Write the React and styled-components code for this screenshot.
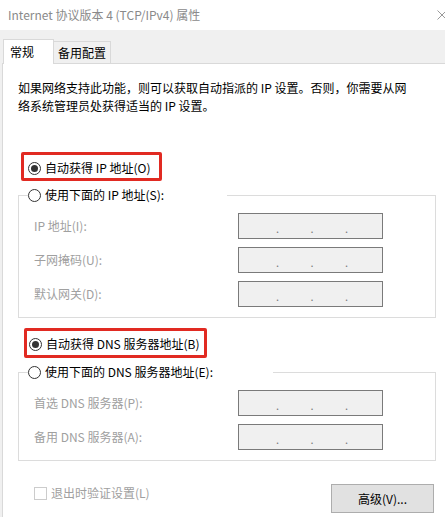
import React from 'react';
import styled, { createGlobalStyle } from 'styled-components';

const GlobalStyle = createGlobalStyle`
  html, body { margin: 0; padding: 0; background: #ffffff; }
  * { box-sizing: border-box; }
`;

const FONT = `"Noto Sans CJK SC", "Microsoft YaHei", "Liberation Sans", sans-serif`;

const Window = styled.div`
  width: 445px;
  height: 517px;
  overflow: hidden;
  display: flex;
  flex-direction: column;
  background: #ffffff;
  font-family: ${FONT};
  font-size: 12px;
  color: #000000;
`;

const TitleBar = styled.div`
  flex: none;
  height: 30px;
  display: flex;
  align-items: center;
  justify-content: space-between;
  padding-left: 8px;
  background: #ffffff;
`;

const Title = styled.span`
  color: #8a8a8a;
  font-size: 12px;
  line-height: 18px;
  white-space: nowrap;
`;

const CloseIcon = styled.svg`
  flex: none;
  width: 10px;
  height: 10px;
  margin-right: -2px;
`;

const Body = styled.div`
  flex: 1;
  display: flex;
  flex-direction: column;
  background: #f0f0f0;
  padding: 9px 0 0 2px;
`;

const TabStrip = styled.div`
  display: flex;
  align-items: flex-end;
  padding-left: 1px;
`;

const Tab = styled.div`
  position: relative;
  z-index: ${p => (p.$active ? 1 : 0)};
  width: ${p => p.$width}px;
  height: ${p => (p.$active ? 25 : 22)}px;
  margin-bottom: ${p => (p.$active ? -1 : 0)}px;
  display: flex;
  align-items: center;
  justify-content: ${p => (p.$active ? 'flex-start' : 'center')};
  padding-left: ${p => (p.$active ? 6 : 0)}px;
  padding-top: ${p => (p.$active ? 0 : 1)}px;
  background: ${p => (p.$active ? '#ffffff' : '#f0f0f0')};
  border: 1px solid #d9d9d9;
  border-bottom: none;
  border-left-width: ${p => (p.$active ? 1 : 0)}px;
  line-height: 18px;
  white-space: nowrap;
`;

const Panel = styled.div`
  flex: 1;
  display: flex;
  flex-direction: column;
  align-items: flex-start;
  background: #ffffff;
  border-top: 1px solid #d9d9d9;
  border-left: 1px solid #d9d9d9;
  padding: 15px 0 0 15px;
`;

const Description = styled.p`
  margin: 0;
  line-height: 18px;
  white-space: nowrap;
`;

const Highlight = styled.div`
  display: flex;
  align-items: center;
  gap: 4px;
  margin: ${p => p.$top}px 0 0 ${p => p.$left}px;
  padding: 4px ${p => p.$padRight}px ${p => p.$padBottom}px ${p => p.$padLeft}px;
  border: 3px solid #e12a22;
  border-radius: 2px;
  line-height: 18px;
  white-space: nowrap;
`;

const Radio = styled.span`
  flex: none;
  width: 13px;
  height: 13px;
  border-radius: 50%;
  border: 1px solid #333333;
  background: #ffffff;
  display: flex;
  align-items: center;
  justify-content: center;
  &::after {
    content: '';
    width: 7px;
    height: 7px;
    border-radius: 50%;
    background: ${p => (p.$checked ? '#333333' : 'transparent')};
  }
`;

const Group = styled.fieldset`
  width: 418px;
  min-width: 0;
  margin: 5px 0 0 0;
  padding: 9px 52px 10px 15px;
  border: 1px solid #dcdcdc;
`;

const Legend = styled.legend`
  display: flex;
  align-items: center;
  gap: 4px;
  height: 18px;
  line-height: 18px;
  margin-left: -6px;
  padding: 0 ${p => p.$gap}px 0 0;
  white-space: nowrap;
`;

const Fields = styled.div`
  display: flex;
  flex-direction: column;
  gap: 8px;
`;

const FieldRow = styled.div`
  display: flex;
  align-items: center;
  justify-content: space-between;
  height: 26px;
`;

const FieldLabel = styled.span`
  color: #a0a0a0;
  line-height: 18px;
  white-space: nowrap;
`;

const IpBox = styled.div`
  flex: none;
  width: 145px;
  height: 26px;
  display: flex;
  align-items: center;
  padding: 0 3px 0 6px;
  background: #f0f0f0;
  border: 1px solid #7a7a7a;
`;

const IpSegment = styled.span`
  flex: 1;
`;

const IpDot = styled.span`
  flex: none;
  width: 4px;
  text-align: center;
  color: #7a7a7a;
  font-size: 11px;
  line-height: 12px;
  margin-top: 3px;
`;

const Footer = styled.div`
  width: 416px;
  margin-top: 23px;
  display: flex;
  align-items: flex-start;
  justify-content: space-between;
`;

const CheckLabel = styled.label`
  display: flex;
  align-items: center;
  gap: 4px;
  padding-left: 16px;
  color: #a0a0a0;
  line-height: 18px;
  white-space: nowrap;
`;

const CheckBox = styled.span`
  flex: none;
  width: 13px;
  height: 13px;
  border: 1px solid #cccccc;
  background: #ffffff;
`;

const Button = styled.button`
  width: 103px;
  height: 29px;
  padding: 0;
  background: #e1e1e1;
  border: 1px solid #adadad;
  font-family: ${FONT};
  font-size: 12px;
  color: #000000;
  line-height: 18px;
`;

function IpInput() {
  return (
    <IpBox>
      <IpSegment />
      <IpDot>.</IpDot>
      <IpSegment />
      <IpDot>.</IpDot>
      <IpSegment />
      <IpDot>.</IpDot>
      <IpSegment />
    </IpBox>
  );
}

function Field({ label }) {
  return (
    <FieldRow>
      <FieldLabel>{label}</FieldLabel>
      <IpInput />
    </FieldRow>
  );
}

export default function App() {
  return (
    <>
      <GlobalStyle />
      <Window>
        <TitleBar>
          <Title>Internet 协议版本 4 (TCP/IPv4) 属性</Title>
          <CloseIcon viewBox="0 0 10 10">
            <path d="M0.5 0.5 L9.5 9.5 M9.5 0.5 L0.5 9.5" stroke="#9a9a9a" strokeWidth="1" fill="none" />
          </CloseIcon>
        </TitleBar>
        <Body>
          <TabStrip>
            <Tab $active $width={51}>常规</Tab>
            <Tab $width={57}>备用配置</Tab>
          </TabStrip>
          <Panel>
            <Description>
              如果网络支持此功能，则可以获取自动指派的 IP 设置。否则，你需要从网
              <br />
              络系统管理员处获得适当的 IP 设置。
            </Description>

            <Highlight $top={37} $left={3} $padLeft={4} $padRight={8} $padBottom={1}>
              <Radio $checked />
              自动获得 IP 地址(O)
            </Highlight>

            <Group>
              <Legend $gap={63}>
                <Radio />
                使用下面的 IP 地址(S):
              </Legend>
              <Fields>
                <Field label="IP 地址(I):" />
                <Field label="子网掩码(U):" />
                <Field label="默认网关(D):" />
              </Fields>
            </Group>

            <Highlight $top={10} $left={6} $padLeft={2} $padRight={5} $padBottom={2}>
              <Radio $checked />
              自动获得 DNS 服务器地址(B)
            </Highlight>

            <Group>
              <Legend $gap={60}>
                <Radio />
                使用下面的 DNS 服务器地址(E):
              </Legend>
              <Fields>
                <Field label="首选 DNS 服务器(P):" />
                <Field label="备用 DNS 服务器(A):" />
              </Fields>
            </Group>

            <Footer>
              <CheckLabel>
                <CheckBox />
                退出时验证设置(L)
              </CheckLabel>
              <Button>高级(V)...</Button>
            </Footer>
          </Panel>
        </Body>
      </Window>
    </>
  );
}
